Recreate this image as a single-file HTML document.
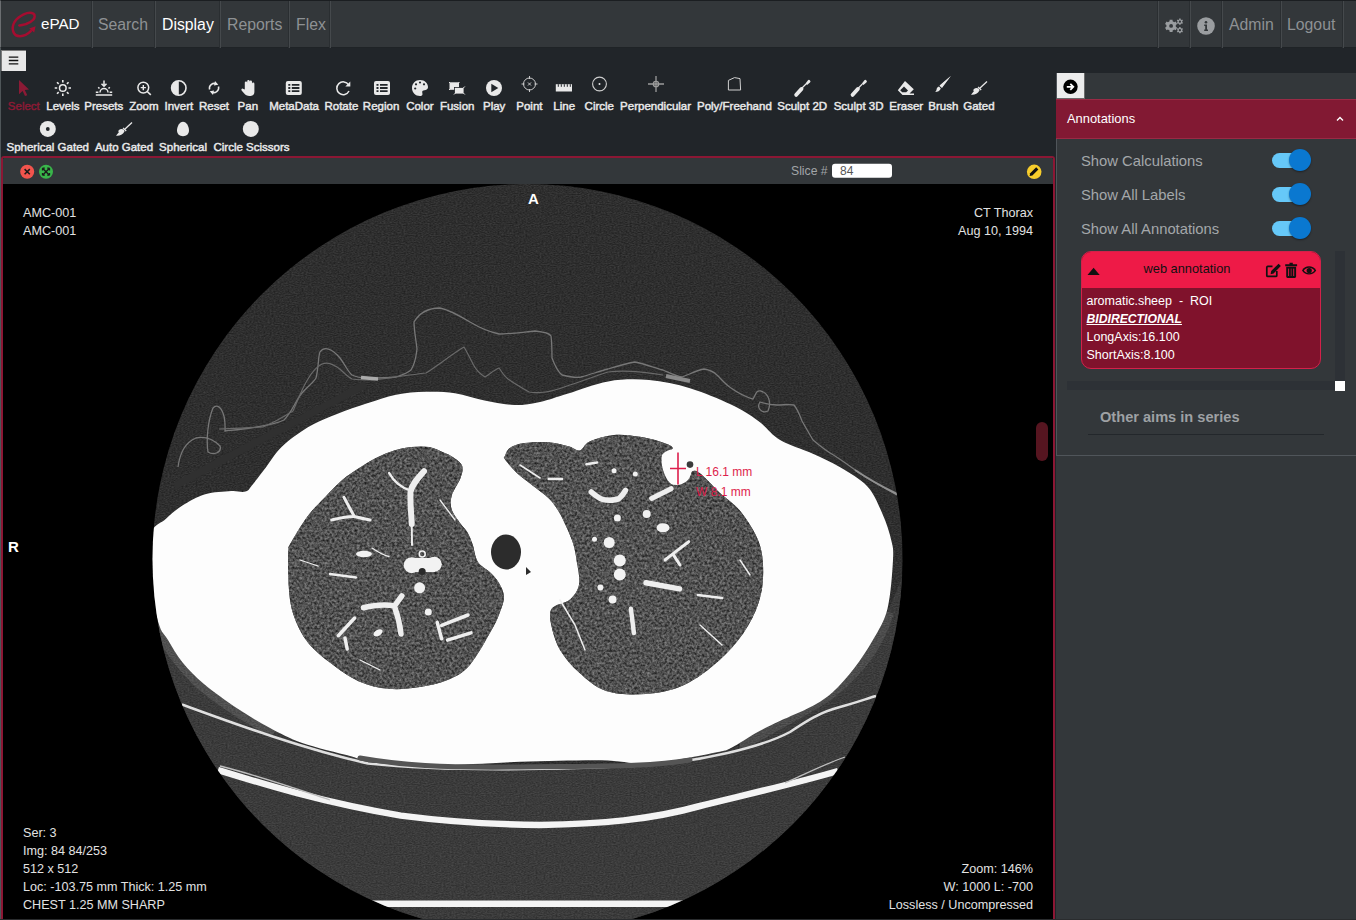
<!DOCTYPE html>
<html><head><meta charset="utf-8">
<style>
*{box-sizing:border-box;margin:0;padding:0}
html,body{width:1356px;height:920px;overflow:hidden;background:#212529;font-family:"Liberation Sans",sans-serif}
body{position:relative}
.abs{position:absolute}
#nav{left:0;top:0;width:1356px;height:48px;background:#33373a;border-top:1px solid #1b1e21;border-left:1px solid #6b6e71;border-bottom:1px solid #1f2326}
.sep{position:absolute;top:0;width:2px;height:47px;background:linear-gradient(90deg,#2a2e31 50%,#45494c 50%)}
.nt{position:absolute;top:14px;font-size:15.8px;line-height:20px;color:#8e9194;white-space:nowrap}
.tl{position:absolute;width:120px;text-align:center;font-size:11.5px;line-height:14px;font-weight:normal;-webkit-text-stroke:0.45px #e9e9e9;color:#e9e9e9;white-space:nowrap}
.tl.sel{-webkit-text-stroke:0.45px #8b1a35}
.tl.sel{color:#8b1a35}
#vp{left:1px;top:156px;width:1054px;height:780px;border:2px solid #8b1734;border-radius:3px;background:#000;overflow:hidden}
.ov{position:absolute;font-size:12.6px;line-height:18px;color:#e2e2e2;white-space:nowrap}
#rp{left:1056px;top:73px;width:300px;height:847px;background:#33373a}
.sw{position:absolute;font-size:14.8px;line-height:18px;color:#a4a7aa;white-space:nowrap}
.tg{position:absolute;left:1272px;width:30px;height:15px;border-radius:7.5px;background:#66c8f8}
.kn{position:absolute;left:1289px;width:22px;height:22px;border-radius:11px;background:#0a78d0;box-shadow:0 1px 2px rgba(0,0,0,.4)}
.ct{position:absolute;font-size:12.5px;line-height:18px;color:#fff;white-space:nowrap}
</style></head><body>
<div id="nav" class="abs">
  <div class="sep" style="left:90px"></div>
  <div class="sep" style="left:153px"></div>
  <div class="sep" style="left:218px"></div>
  <div class="sep" style="left:287px"></div>
  <div class="sep" style="left:328px"></div>
  <div class="sep" style="left:1156px"></div>
  <div class="sep" style="left:1188px"></div>
  <div class="sep" style="left:1220px"></div>
  <div class="sep" style="left:1279px"></div>
  <div class="sep" style="left:1341px"></div>
<div class="nt" style="left:40px;color:#fff;font-size:15.2px;top:13px">ePAD</div>
  <div class="nt" style="left:97px">Search</div>
  <div class="nt" style="left:161px;color:#fff">Display</div>
  <div class="nt" style="left:226px">Reports</div>
  <div class="nt" style="left:295px">Flex</div>
  <div class="nt" style="left:1228px">Admin</div>
  <div class="nt" style="left:1286px">Logout</div>
</div>
<!-- hamburger -->
<div class="abs" style="left:1px;top:50px;width:25px;height:21px;background:#e8e8e8;border-top:1px solid #7a7a7a;border-left:1px solid #7a7a7a"></div>
<svg class="abs" style="left:0;top:0" width="1356" height="160" viewBox="0 0 1356 160">
  <!-- logo -->
  <path d="M19.3,25.4 C22,25.2 24,24.6 26.1,24 C29,23 31.5,21.8 33.2,19.8 C35,17.6 35.3,14.8 33.4,13.6 C31.5,12.6 27,12.8 23.7,14.3 C20,16 16.5,18.8 14.5,22 C12.8,25 12.3,28.5 13.2,31.5 C14.2,34.5 16.8,36.2 20,36.2 C24,36.2 27.5,34.5 30.8,31.2" fill="none" stroke="#a50d30" stroke-width="2.5" stroke-linecap="round"/>
  <path d="M29.2,28.4 L35.6,26.2 L34.2,32.6 Z" fill="#a50d30"/>
  <!-- gears -->
  <path d="M1169.59,21.34 L1169.63,19.77 L1172.57,19.77 L1172.61,21.34 L1174.29,22.32 L1175.67,21.56 L1177.14,24.11 L1175.80,24.93 L1175.80,26.87 L1177.14,27.69 L1175.67,30.24 L1174.29,29.48 L1172.61,30.46 L1172.57,32.03 L1169.63,32.03 L1169.59,30.46 L1167.91,29.48 L1166.53,30.24 L1165.06,27.69 L1166.40,26.87 L1166.40,24.93 L1165.06,24.11 L1166.53,21.56 L1167.91,22.32Z" fill="#9a9da0"/>
  <circle cx="1171.1" cy="25.9" r="1.9" fill="#33373a"/>
  <path d="M1179.15,19.42 L1179.15,18.59 L1180.65,18.59 L1180.65,19.42 L1181.50,19.91 L1182.22,19.50 L1182.97,20.79 L1182.25,21.21 L1182.25,22.19 L1182.97,22.61 L1182.22,23.90 L1181.50,23.49 L1180.65,23.98 L1180.65,24.81 L1179.15,24.81 L1179.15,23.98 L1178.30,23.49 L1177.58,23.90 L1176.83,22.61 L1177.55,22.19 L1177.55,21.21 L1176.83,20.79 L1177.58,19.50 L1178.30,19.91Z" fill="#9a9da0"/>
  <circle cx="1179.9" cy="21.7" r="1.1" fill="#33373a"/>
  <path d="M1179.15,27.92 L1179.15,27.09 L1180.65,27.09 L1180.65,27.92 L1181.50,28.41 L1182.22,28.00 L1182.97,29.29 L1182.25,29.71 L1182.25,30.69 L1182.97,31.11 L1182.22,32.40 L1181.50,31.99 L1180.65,32.48 L1180.65,33.31 L1179.15,33.31 L1179.15,32.48 L1178.30,31.99 L1177.58,32.40 L1176.83,31.11 L1177.55,30.69 L1177.55,29.71 L1176.83,29.29 L1177.58,28.00 L1178.30,28.41Z" fill="#9a9da0"/>
  <circle cx="1179.9" cy="30.2" r="1.1" fill="#33373a"/>
  <!-- info -->
  <circle cx="1206" cy="26" r="8.8" fill="#9a9da0"/>
  <circle cx="1206" cy="22.2" r="1.3" fill="#33373a"/>
  <path d="M1204.2,24.5h2.8v5h1v1.4h-3.8v-1.4h1v-3.6h-1z" fill="#33373a"/>
  <!-- hamburger lines -->
  <path d="M8.8,57.2h9.5M8.8,60.5h9.5M8.8,63.8h9.5" stroke="#111" stroke-width="1.3"/>

  <!-- row1 icons -->
  <path d="M19,80 L29,89.5 L24.8,90 L27.3,95.2 L25,96 L22.6,90.9 L19,94.3Z" fill="#8b1a35"/>
  <g stroke="#e9e9e9" fill="none">
    <circle cx="62.8" cy="88" r="3.3" stroke-width="1.5"/>
    <path d="M62.8,80v2.5M62.8,93.5v2.5M54.7,88h2.5M68.5,88h2.5M57,82.2l1.7,1.7M66.9,92.1l1.7,1.7M57,93.8l1.7,-1.7M66.9,83.9l1.7,-1.7" stroke-width="1.6"/>
  </g>
  <g stroke="#e9e9e9" fill="none" stroke-width="1.5">
    <path d="M104,80.5v5.5M101.5,83.8l2.5,2.5l2.5,-2.5"/>
    <path d="M100,92.5a4,4 0 0 1 8,0"/>
    <path d="M98.2,87.2l1.3,1.3M109.8,87.2l-1.3,1.3M95.8,92.3h2.6M109.6,92.3h2.6M95.8,95h16.4"/>
  </g>
  <g stroke="#e9e9e9" fill="none">
    <circle cx="143.3" cy="87.6" r="5.4" stroke-width="1.5"/>
    <path d="M147.2,91.5l3.6,3.4" stroke-width="1.6"/>
    <path d="M143.3,85v5.2M140.7,87.6h5.2" stroke-width="1.4"/>
  </g>
  <circle cx="178.8" cy="88" r="7.2" fill="none" stroke="#e9e9e9" stroke-width="1.6"/>
  <path d="M178.8,80.8a7.2,7.2 0 0 0 0,14.4z" fill="#e9e9e9"/>
  <g stroke="#e9e9e9" fill="none" stroke-width="1.5">
    <path d="M209.6,89.5a4.8,4.8 0 0 1 7.2,-5.3"/>
    <path d="M218.5,86.5a4.8,4.8 0 0 1 -7.2,5.3"/>
  </g>
  <path d="M215,81l3.3,3.8l-4.3,0.6z M213,95l-3.3,-3.8l4.3,-0.6z" fill="#e9e9e9"/>
  <!-- pan hand -->
  <path d="M244.8,89.5 V82.6 a1.2,1.2 0 0 1 2.4,0 V88 V81.3 a1.2,1.2 0 0 1 2.4,0 V88 V81.8 a1.2,1.2 0 0 1 2.4,0 V88.5 V83.8 a1.2,1.2 0 0 1 2.4,0 V91.5 C254.4,95 252.5,96 249.5,96 C247,96 245.5,95 244,93.3 L241.6,90.4 a1.1,1.1 0 0 1 1.8,-1.3z" fill="#e9e9e9"/>
  <!-- metadata / region -->
  <rect x="285.8" y="81" width="16" height="14" rx="2" fill="#e9e9e9"/>
  <path d="M288.3,84.8h2M291.8,84.8h7.6M288.3,88h2M291.8,88h7.6M288.3,91.2h2M291.8,91.2h7.6" stroke="#212529" stroke-width="1.8"/>
  <rect x="374" y="81" width="16" height="14" rx="2" fill="#e9e9e9"/>
  <path d="M376.5,84.8h2M380,84.8h7.6M376.5,88h2M380,88h7.6M376.5,91.2h2M380,91.2h7.6" stroke="#212529" stroke-width="1.8"/>
  <!-- rotate -->
  <path d="M348.6,84.8 A6.4,6.4 0 1 0 349,91" fill="none" stroke="#e9e9e9" stroke-width="1.5"/>
  <path d="M350.3,81.5 V86.5 H345.3z" fill="#e9e9e9"/>
  <!-- palette -->
  <path d="M420,80 C425,80 428,83.5 428,87 C428,90 425,90 423.5,90.5 C421.5,91 422.5,93 422.5,94 C422.5,95.5 421.5,96 420,96 C415.5,96 412,92.5 412,88 C412,83.5 415.5,80 420,80Z" fill="#e9e9e9"/>
  <circle cx="415.2" cy="88.5" r="1.1" fill="#212529"/>
  <circle cx="416" cy="84.3" r="1.1" fill="#212529"/>
  <circle cx="420" cy="82.5" r="1.1" fill="#212529"/>
  <circle cx="424" cy="84.3" r="1.1" fill="#212529"/>
  <!-- fusion -->
  <rect x="449.5" y="82.3" width="9.5" height="7.5" fill="#e9e9e9"/>
  <rect x="454.5" y="87.5" width="9.5" height="6.5" fill="#e9e9e9" stroke="#212529" stroke-width="0.8"/>
  <path d="M449,82l1.5,1.5M459.5,82l-1.5,1.5M449,90l1.5,-1.5M464.8,86.5l-1.5,1.5M454,94.5l1.5,-1.5M464.8,94.5l-1.5,-1.5" stroke="#e9e9e9" stroke-width="1"/>
  <!-- play -->
  <circle cx="494" cy="88" r="8" fill="#e9e9e9"/>
  <path d="M491.3,83.8 L498.3,88 L491.3,92.2Z" fill="#212529"/>
  <!-- point -->
  <g stroke="#c9c9c9" fill="none" stroke-width="1">
    <circle cx="529.5" cy="84" r="6"/>
    <path d="M529.5,76v3M529.5,89v3M521.5,84h3M534.5,84h3M528,82.5l3,3M531,82.5l-3,3"/>
  </g>
  <!-- ruler -->
  <path d="M555.8,84.2 h16.2 v7.3 h-16.2z" fill="#e9e9e9"/>
  <path d="M558.3,84.2v2.6M561.3,84.2v2.6M564.3,84.2v2.6M567.3,84.2v2.6M570.3,84.2v2.6" stroke="#212529" stroke-width="1"/>
  <!-- circle -->
  <circle cx="599.5" cy="84" r="6.9" fill="none" stroke="#cfcfcf" stroke-width="1.1"/>
  <circle cx="599.5" cy="84" r="1" fill="#e9e9e9"/>
  <!-- perpendicular -->
  <g stroke="#9c9c9c" fill="none" stroke-width="1.3">
    <path d="M656,76v16M648,84h16"/>
    <circle cx="656" cy="84" r="2.7"/>
  </g>
  <!-- poly -->
  <path d="M728.4,80.4 L734.5,77.6 L740,78.6 L740.6,90 L728.4,90Z" fill="none" stroke="#cfcfcf" stroke-width="1"/>
  <!-- sculpt 2D / 3D -->
  <g id="sc" fill="#e9e9e9">
    <path d="M794.8,93.6 L800.2,87.6 a1.9,1.9 0 0 1 2.7,2.7 L797.5,96.3 a1.9,1.9 0 0 1 -2.7,-2.7z"/>
    <path d="M805.5,83.5 L807.8,80.4 a1.5,1.5 0 0 1 2.2,2.2 L807,85 L805.5,83.5z"/>
    <path d="M801.5,88.5 L806,84" stroke="#e9e9e9" stroke-width="1.2"/>
  </g>
  <use href="#sc" x="56.4"/>
  <!-- eraser -->
  <path d="M905,81 L913.8,89.3 L909.5,93.5 L914,93.5 V95 H902.5 L897.8,90.3 Z" fill="#e9e9e9"/>
  <path d="M900.2,90.3 L904,86.5 L908,90.5 L906.2,92.3 H902.2Z" fill="#212529"/>
  <!-- brush -->
  <path d="M950.8,76 L941.5,87.5 L939.8,85.8Z" fill="#e9e9e9"/>
  <path d="M950.8,76 L942,88 L939.5,85.5Z" fill="#e9e9e9"/>
  <path d="M939,86.5 C937.5,86.8 936.5,88.5 936.5,90 L935.3,92 C937.5,92 940,91 940.8,88.5Z" fill="#e9e9e9"/>
  <!-- gated -->
  <g id="gt" fill="#e9e9e9">
    <path d="M987,81.5 L979.5,88.5" stroke="#e9e9e9" stroke-width="1.3"/>
    <path d="M978,86.8 l3.2,3.2" stroke="#e9e9e9" stroke-width="1.2"/>
    <path d="M978.8,88.5 C976,87.2 973.5,88.5 973.2,90.5 L974,91 L971,94.8 C974.5,95.2 977.5,94 979.5,90.5Z"/>
  </g>
  <!-- row2 -->
  <circle cx="47.8" cy="128.9" r="8" fill="#e9e9e9"/>
  <circle cx="47.8" cy="129" r="1.9" fill="#212529"/>
  <use href="#gt" x="-855" y="41"/>
  <path d="M183,121.8 C186.5,121.8 189,126.5 189,130.5 C189,134 186.5,136.2 183,136.2 C179.5,136.2 177,134 177,130.5 C177,126.5 179.5,121.8 183,121.8Z" fill="#e9e9e9"/>
  <circle cx="250.8" cy="128.9" r="8" fill="#e9e9e9"/>
</svg>
<div class="tl sel" style="left:-36.2px;top:99px">Select</div>
<div class="tl" style="left:2.9px;top:99px">Levels</div>
<div class="tl" style="left:43.8px;top:99px">Presets</div>
<div class="tl" style="left:83.9px;top:99px">Zoom</div>
<div class="tl" style="left:118.9px;top:99px">Invert</div>
<div class="tl" style="left:154.0px;top:99px">Reset</div>
<div class="tl" style="left:187.8px;top:99px">Pan</div>
<div class="tl" style="left:234.1px;top:99px">MetaData</div>
<div class="tl" style="left:281.4px;top:99px">Rotate</div>
<div class="tl" style="left:321.1px;top:99px">Region</div>
<div class="tl" style="left:359.9px;top:99px">Color</div>
<div class="tl" style="left:397.2px;top:99px">Fusion</div>
<div class="tl" style="left:434.2px;top:99px">Play</div>
<div class="tl" style="left:469.4px;top:99px">Point</div>
<div class="tl" style="left:504.2px;top:99px">Line</div>
<div class="tl" style="left:539.3px;top:99px">Circle</div>
<div class="tl" style="left:595.6px;top:99px">Perpendicular</div>
<div class="tl" style="left:674.4px;top:99px">Poly/Freehand</div>
<div class="tl" style="left:742.2px;top:99px">Sculpt 2D</div>
<div class="tl" style="left:798.6px;top:99px">Sculpt 3D</div>
<div class="tl" style="left:846.2px;top:99px">Eraser</div>
<div class="tl" style="left:883.4px;top:99px">Brush</div>
<div class="tl" style="left:918.9px;top:99px">Gated</div>
<div class="tl" style="left:-12.3px;top:140px">Spherical Gated</div>
<div class="tl" style="left:64.0px;top:140px">Auto Gated</div>
<div class="tl" style="left:123.1px;top:140px">Spherical</div>
<div class="tl" style="left:191.5px;top:140px">Circle Scissors</div>

<!-- viewport -->
<div id="vp" class="abs">
  <div class="abs" style="left:0;top:0;width:1051px;height:26px;background:#33373a"></div>
</div>
<svg class="abs" style="left:0;top:0" width="1356" height="920" viewBox="0 0 1356 920">
  <defs>
    <clipPath id="vclip"><rect x="3" y="184" width="1050" height="736"/></clipPath>
    <clipPath id="cclip"><circle cx="527.5" cy="559" r="375"/></clipPath>
    <filter id="nz2" x="0" y="0" width="100%" height="100%" filterUnits="objectBoundingBox" color-interpolation-filters="sRGB">
      <feTurbulence type="fractalNoise" baseFrequency="0.5 0.9" numOctaves="2" seed="11"/>
      <feColorMatrix type="matrix" values="1 0 0 0 0  1 0 0 0 0  1 0 0 0 0  0 0 0 0 0.16"/>
    </filter>
    <clipPath id="lclip"><path d="M288.5,548.0 C288.5,548.0 286.9,549.5 290.0,544.3 C293.1,539.0 301.6,524.3 307.4,516.5 C313.2,508.7 319.0,503.5 324.8,497.4 C330.6,491.3 336.4,484.9 342.2,480.0 C348.0,475.1 353.8,471.6 359.6,467.8 C365.4,464.0 371.2,460.3 377.0,457.4 C382.8,454.5 388.5,452.1 394.3,450.4 C400.1,448.7 405.9,447.6 411.7,447.0 C417.5,446.4 423.9,446.1 429.1,447.0 C434.3,447.9 438.9,450.5 443.0,452.2 C447.1,453.9 450.3,455.1 453.5,457.4 C456.7,459.7 461.1,462.5 462.2,466.0 C463.3,469.5 462.1,473.4 460.4,478.3 C458.6,483.2 453.1,490.5 451.7,495.7 C450.2,500.9 450.2,505.0 451.7,509.6 C453.1,514.2 457.8,519.7 460.4,523.5 C463.0,527.3 465.4,528.7 467.4,532.2 C469.4,535.7 470.9,539.4 472.6,544.3 C474.3,549.2 474.9,557.1 477.8,561.7 C480.7,566.4 486.5,568.7 490.0,572.2 C493.5,575.7 496.4,578.6 498.7,582.6 C501.0,586.6 503.7,591.6 503.9,596.5 C504.1,601.4 502.0,606.5 500.0,612.0 C498.0,617.5 496.8,620.9 491.7,629.8 C486.6,638.7 477.0,656.8 469.6,665.2 C462.2,673.6 456.1,676.3 447.5,680.0 C438.9,683.7 427.8,685.8 418.0,687.3 C408.2,688.8 398.3,689.8 388.5,688.8 C378.7,687.8 368.8,685.8 359.0,681.4 C349.2,677.0 338.3,669.2 329.5,662.3 C320.7,655.4 312.2,648.7 306.0,640.0 C299.8,631.3 294.9,620.3 292.0,610.0 C289.1,599.7 288.9,588.6 288.3,578.3 C287.7,568.0 288.2,553.7 288.5,548.0Z"/><path d="M504.9,456.1 C504.9,456.1 506.5,450.1 509.8,447.9 C513.1,445.7 518.0,443.9 524.5,443.0 C531.0,442.1 541.6,441.6 548.9,442.2 C556.2,442.8 563.3,444.9 568.5,446.3 C573.7,447.7 576.4,451.2 579.9,450.4 C583.4,449.6 583.9,444.0 589.6,441.4 C595.3,438.8 606.0,435.7 614.1,434.9 C622.2,434.1 630.9,435.4 638.5,436.5 C646.1,437.6 654.0,439.5 659.7,441.4 C665.4,443.3 672.2,445.4 672.8,447.9 C673.3,450.3 663.8,452.8 663.0,456.1 C662.2,459.4 666.5,462.9 667.9,467.5 C669.2,472.1 668.4,481.8 671.1,484.0 C673.8,486.2 679.9,483.2 684.0,481.0 C688.1,478.8 690.0,469.0 696.0,471.0 C702.0,473.0 712.6,486.3 720.0,493.0 C727.4,499.7 733.9,503.2 740.4,511.3 C746.9,519.4 754.9,531.6 758.7,541.7 C762.5,551.9 763.2,562.1 763.2,572.2 C763.2,582.4 762.0,592.5 758.7,602.6 C755.4,612.7 750.1,623.4 743.5,633.0 C736.9,642.6 729.0,651.7 719.1,660.4 C709.2,669.1 696.2,679.4 684.0,685.0 C671.8,690.6 659.0,693.0 646.0,694.0 C633.0,695.0 617.1,694.6 606.0,691.0 C594.9,687.4 586.6,679.2 579.1,672.6 C571.6,666.0 565.5,658.9 560.9,651.3 C556.3,643.7 553.2,634.0 551.7,626.9 C550.2,619.8 548.7,613.3 551.7,608.7 C554.8,604.1 565.4,603.6 570.0,599.5 C574.6,595.4 578.0,590.8 579.1,584.3 C580.2,577.8 577.6,567.1 576.6,560.4 C575.6,553.7 574.9,549.5 573.3,544.1 C571.7,538.7 569.2,533.2 566.8,527.8 C564.4,522.4 561.7,516.4 558.7,511.5 C555.7,506.6 553.2,502.9 548.9,498.5 C544.5,494.1 538.0,489.8 532.6,485.4 C527.2,481.0 520.9,476.8 516.3,472.4 C511.7,468.0 506.8,462.0 504.9,459.3 C503.0,456.6 504.1,458.0 504.9,456.1Z"/></clipPath>
    <filter id="nz" x="0" y="0" width="100%" height="100%" filterUnits="objectBoundingBox" color-interpolation-filters="sRGB">
      <feTurbulence type="fractalNoise" baseFrequency="0.4" numOctaves="2" seed="7"/>
      <feColorMatrix type="matrix" values="0.6 0 0 0 0.02  0.6 0 0 0 0.02  0.6 0 0 0 0.02  0 0 0 0 1"/>
    </filter>
  </defs>
  <g clip-path="url(#vclip)">
    <circle cx="527.5" cy="559" r="375" fill="#1f1f1f"/>
    <g clip-path="url(#cclip)">
      <path d="M150,600 L160,622 L184,664 L238,710 L302,745 L368,761 L520,765 L650,765 L732,749 L811,708 L856,668 L889,608 L910,560 L910,940 L150,940 Z" fill="#2e2e2e"/>
      <path d="M157,622 C168,645 185,668 204,685 C225,702 250,718 275,731" fill="none" stroke="#474747" stroke-width="14"/>
      <path d="M888,612 C878,645 860,668 832,692 C810,708 780,722 740,745" fill="none" stroke="#424242" stroke-width="12"/>
      <rect x="150" y="184" width="760" height="740" filter="url(#nz2)"/>
      <path d="M248.5,490.0 C248.5,490.0 261.3,473.5 266.2,467.0 C271.1,460.5 273.6,455.7 278.0,450.8 C282.4,445.9 286.8,441.9 292.7,437.5 C298.6,433.1 306.0,428.1 313.4,424.2 C320.8,420.3 328.1,417.3 337.0,413.9 C345.9,410.5 356.7,406.8 366.5,403.6 C376.3,400.4 386.2,396.7 396.0,394.7 C405.8,392.7 415.7,392.1 425.5,391.8 C435.3,391.6 445.2,391.7 455.0,393.2 C464.8,394.7 474.7,398.6 484.5,400.6 C494.3,402.6 504.8,404.8 514.0,405.0 C523.2,405.2 531.1,403.8 540.0,401.9 C548.9,400.0 555.9,397.1 567.3,393.7 C578.7,390.3 594.6,383.7 608.2,381.4 C621.8,379.1 635.5,378.9 649.1,380.0 C662.7,381.1 676.4,384.1 690.0,388.2 C703.6,392.3 719.6,399.1 731.0,404.6 C742.4,410.1 750.1,415.1 758.3,421.0 C766.5,426.9 771.0,434.6 780.1,440.0 C789.2,445.4 802.9,449.1 812.9,453.7 C822.9,458.2 831.0,461.8 840.1,467.3 C849.2,472.8 860.3,478.7 867.4,486.5 C874.5,494.3 878.5,505.0 882.5,513.9 C886.5,522.8 889.5,532.3 891.2,540.0 C893.0,547.7 893.6,548.5 893.0,560.0 C892.4,571.5 890.8,595.4 887.5,608.7 C884.2,622.0 878.6,629.8 873.0,639.8 C867.4,649.8 860.8,659.7 854.0,668.5 C847.2,677.3 839.6,686.0 832.4,692.4 C825.2,698.8 819.8,702.0 811.0,706.8 C802.2,711.6 789.0,716.7 779.8,721.1 C770.6,725.5 763.9,728.7 755.9,733.1 C747.9,737.5 738.7,744.3 732.0,747.5 C725.3,750.7 729.2,749.8 715.6,752.5 C702.0,755.2 669.4,762.2 650.4,763.5 C631.4,764.8 623.2,760.5 601.5,760.2 C579.8,759.9 548.0,761.0 520.0,761.8 C492.0,762.6 458.7,765.4 433.4,765.1 C408.1,764.8 382.1,761.7 368.2,760.2 C354.3,758.7 361.0,758.9 350.0,756.0 C339.0,753.1 315.6,747.7 302.2,743.0 C288.8,738.3 280.5,733.6 269.6,727.8 C258.7,722.0 247.9,715.5 237.0,708.3 C226.1,701.0 213.4,691.9 204.3,684.3 C195.2,676.7 188.7,670.0 182.6,662.6 C176.5,655.2 172.0,646.5 168.0,640.0 C164.0,633.5 161.7,633.5 158.7,623.5 C155.7,613.5 151.4,594.8 150.0,580.0 C148.6,565.2 147.3,545.2 150.0,535.0 C152.7,524.8 160.6,523.6 166.0,518.7 C171.4,513.8 175.9,509.7 182.4,505.6 C188.9,501.5 197.0,496.6 205.2,494.2 C213.3,491.8 224.1,491.7 231.3,491.0 C238.5,490.3 242.7,494.0 248.5,490.0Z" fill="#fdfdfd"/>
      <!-- table lines -->
      <path d="M182,704.5 C230,722 300,748 368,763.5 C430,770 520,771.5 650,765 C700,761 760,748 790,732 C805,722 820,712 840,707 C855,703 866,699 876,696" fill="none" stroke="#e0e0e0" stroke-width="2.5"/>
      <path d="M218,770 C260,783 320,802 400.8,815.6 C450,822 500,824.5 540,825 C600,824 650,820 700,806 C740,796 790,785 838,771" fill="none" stroke="#f4f4f4" stroke-width="6.5"/>
      <path d="M220,766 C260,776 300,790 330,800 M785,783 C805,774 825,764 845,757" fill="none" stroke="#bdbdbd" stroke-width="1.3"/>
      <path d="M370,903.7 H690" stroke="#f4f4f4" stroke-width="6.5"/>
      <path d="M360,758 C400,765 440,768 520,767 C600,766 650,767 690,760" fill="none" stroke="#555" stroke-width="5" stroke-linecap="round"/>
      <!-- skin lines -->
      <path d="M175,486 C220,460 300,420 366,384" fill="none" stroke="#303030" stroke-width="7"/>
      <path d="M178,467 C180,452 186,442 196,438 C206,436 214,440 220,446 C222,452 214,456 208,452 C206,440 208,420 213,408 C218,402 226,410 225,431 C234,430 244,429 250,428 C264,426 276,424 284,420 C292,412 296,400 302,393 C308,386 314,382 316,378 C319,366 318,356 320,352 C324,346 332,348 340,358 C346,366 348,372 352,375 C358,378 362,378 367,378 C378,378 388,378 396,377 C402,375 408,373 411,370 C416,362 416,355 417,349 C416,340 414,330 414,322 C420,312 430,308 440,308 C450,310 460,316 470,322 C480,328 490,332 499,334 C510,334 524,332 535,331 C545,332 550,334 551,336 C552,344 552,352 552,358 C555,366 558,372 562,375 C570,377 576,378 581,377 C592,374 600,371 608,369 C618,366 628,363 635,362 C645,364 655,368 663,370 C670,373 676,376 682,377 C690,374 698,370 704,369 C710,370 714,372 717,375 C722,380 726,385 731,388 C738,393 746,397 753,399 C756,394 756,390 761,391 C768,393 772,402 768,411 C762,414 756,408 760,402 C766,404 772,405 777,405 C784,405 789,404 794,405 C798,410 800,416 802,421 C806,428 810,435 813,440 C820,446 828,452 835,456 C846,463 856,471 867,478 C877,484 888,490 897,495" fill="none" stroke="#777" stroke-width="1.3"/>
      <path d="M219,429 C235,428 250,428 263,427 C275,422 285,416 293,411 C298,400 302,388 308,379 C312,372 318,366 322,364 C328,362 332,364 337,367 C342,370 346,376 352,379 C360,380 366,380 372,380 C390,378 408,375 426,373 C440,364 452,354 464,347 C467,352 470,358 473,364 C476,370 480,374 485,377 C490,374 494,370 499,368 C502,372 504,376 508,379 C515,384 522,388 529,392 C540,394 552,392 567,386 C580,382 595,376 608,372 C625,370 645,372 663,375" fill="none" stroke="#6a6a6a" stroke-width="1.2"/>
      <path d="M361,377.5 L378,379" stroke="#aaa" stroke-width="3.5"/>
      <path d="M666,376 L690,381" stroke="#8a8a8a" stroke-width="4"/>
      <path d="M855,470 C870,480 885,488 897,494" stroke="#909090" stroke-width="2"/>
    </g>
    <!-- lungs -->
    <path d="M288.5,548.0 C288.5,548.0 286.9,549.5 290.0,544.3 C293.1,539.0 301.6,524.3 307.4,516.5 C313.2,508.7 319.0,503.5 324.8,497.4 C330.6,491.3 336.4,484.9 342.2,480.0 C348.0,475.1 353.8,471.6 359.6,467.8 C365.4,464.0 371.2,460.3 377.0,457.4 C382.8,454.5 388.5,452.1 394.3,450.4 C400.1,448.7 405.9,447.6 411.7,447.0 C417.5,446.4 423.9,446.1 429.1,447.0 C434.3,447.9 438.9,450.5 443.0,452.2 C447.1,453.9 450.3,455.1 453.5,457.4 C456.7,459.7 461.1,462.5 462.2,466.0 C463.3,469.5 462.1,473.4 460.4,478.3 C458.6,483.2 453.1,490.5 451.7,495.7 C450.2,500.9 450.2,505.0 451.7,509.6 C453.1,514.2 457.8,519.7 460.4,523.5 C463.0,527.3 465.4,528.7 467.4,532.2 C469.4,535.7 470.9,539.4 472.6,544.3 C474.3,549.2 474.9,557.1 477.8,561.7 C480.7,566.4 486.5,568.7 490.0,572.2 C493.5,575.7 496.4,578.6 498.7,582.6 C501.0,586.6 503.7,591.6 503.9,596.5 C504.1,601.4 502.0,606.5 500.0,612.0 C498.0,617.5 496.8,620.9 491.7,629.8 C486.6,638.7 477.0,656.8 469.6,665.2 C462.2,673.6 456.1,676.3 447.5,680.0 C438.9,683.7 427.8,685.8 418.0,687.3 C408.2,688.8 398.3,689.8 388.5,688.8 C378.7,687.8 368.8,685.8 359.0,681.4 C349.2,677.0 338.3,669.2 329.5,662.3 C320.7,655.4 312.2,648.7 306.0,640.0 C299.8,631.3 294.9,620.3 292.0,610.0 C289.1,599.7 288.9,588.6 288.3,578.3 C287.7,568.0 288.2,553.7 288.5,548.0Z" fill="#525252"/>
    <path d="M504.9,456.1 C504.9,456.1 506.5,450.1 509.8,447.9 C513.1,445.7 518.0,443.9 524.5,443.0 C531.0,442.1 541.6,441.6 548.9,442.2 C556.2,442.8 563.3,444.9 568.5,446.3 C573.7,447.7 576.4,451.2 579.9,450.4 C583.4,449.6 583.9,444.0 589.6,441.4 C595.3,438.8 606.0,435.7 614.1,434.9 C622.2,434.1 630.9,435.4 638.5,436.5 C646.1,437.6 654.0,439.5 659.7,441.4 C665.4,443.3 672.2,445.4 672.8,447.9 C673.3,450.3 663.8,452.8 663.0,456.1 C662.2,459.4 666.5,462.9 667.9,467.5 C669.2,472.1 668.4,481.8 671.1,484.0 C673.8,486.2 679.9,483.2 684.0,481.0 C688.1,478.8 690.0,469.0 696.0,471.0 C702.0,473.0 712.6,486.3 720.0,493.0 C727.4,499.7 733.9,503.2 740.4,511.3 C746.9,519.4 754.9,531.6 758.7,541.7 C762.5,551.9 763.2,562.1 763.2,572.2 C763.2,582.4 762.0,592.5 758.7,602.6 C755.4,612.7 750.1,623.4 743.5,633.0 C736.9,642.6 729.0,651.7 719.1,660.4 C709.2,669.1 696.2,679.4 684.0,685.0 C671.8,690.6 659.0,693.0 646.0,694.0 C633.0,695.0 617.1,694.6 606.0,691.0 C594.9,687.4 586.6,679.2 579.1,672.6 C571.6,666.0 565.5,658.9 560.9,651.3 C556.3,643.7 553.2,634.0 551.7,626.9 C550.2,619.8 548.7,613.3 551.7,608.7 C554.8,604.1 565.4,603.6 570.0,599.5 C574.6,595.4 578.0,590.8 579.1,584.3 C580.2,577.8 577.6,567.1 576.6,560.4 C575.6,553.7 574.9,549.5 573.3,544.1 C571.7,538.7 569.2,533.2 566.8,527.8 C564.4,522.4 561.7,516.4 558.7,511.5 C555.7,506.6 553.2,502.9 548.9,498.5 C544.5,494.1 538.0,489.8 532.6,485.4 C527.2,481.0 520.9,476.8 516.3,472.4 C511.7,468.0 506.8,462.0 504.9,459.3 C503.0,456.6 504.1,458.0 504.9,456.1Z" fill="#525252"/>
    <g clip-path="url(#lclip)"><rect x="280" y="430" width="490" height="270" filter="url(#nz)"/></g>
    <!-- trachea -->
    <ellipse cx="506" cy="552" rx="15" ry="17.5" fill="#2c2c2c"/>
    <path d="M526,567 L531,572 L526,575Z" fill="#2c2c2c"/>
    <!-- vessels left -->
    <g fill="#f2f2f2">
      <circle cx="411.7" cy="565.2" r="8"/>
      <circle cx="434.3" cy="564.3" r="7.5"/>
      <rect x="411" y="558" width="24" height="14"/>
      <circle cx="419.6" cy="587.8" r="5.5"/>
      <circle cx="422.2" cy="554" r="3" fill="none" stroke="#f2f2f2" stroke-width="1.5"/>
      <ellipse cx="364" cy="554" rx="8" ry="3.2"/>
      <ellipse cx="378" cy="632.8" rx="5" ry="3" transform="rotate(-30 378 632.8)"/>
      <circle cx="428.3" cy="612.1" r="3.5"/>
      <ellipse cx="663" cy="527.8" rx="6.5" ry="4.5"/>
      <circle cx="646.7" cy="514" r="4"/>
      <circle cx="617.4" cy="518" r="3.5"/>
      <circle cx="609.2" cy="542.5" r="5.5"/>
      <circle cx="619.8" cy="560.4" r="6"/>
      <circle cx="619.8" cy="574.5" r="6"/>
      <circle cx="614.1" cy="470.8" r="2.5"/>
      <circle cx="635.3" cy="474" r="2.5"/>
      <circle cx="612.6" cy="599.5" r="4"/>
      <circle cx="600.4" cy="587.4" r="3"/>
      <circle cx="594.5" cy="539.2" r="2.5"/>
    </g>
    <circle cx="422.2" cy="571.5" r="3.5" fill="#2a2a2a"/>
    <g stroke="#eeeeee" fill="none" stroke-linecap="round">
      <path d="M424,471.3 C418,478 412,484 410.5,492 C410,505 411.5,515 411.7,524" stroke-width="6"/>
      <path d="M411.7,524 L412,545" stroke-width="2"/>
      <path d="M389.1,473 C393,480 400,487 410,490.4" stroke-width="2.5"/>
      <path d="M331.7,520 C340,518 348,516 354.3,516.5 C360,518 365,519 370,520 M344,497.4 L354.3,516.5" stroke-width="3"/>
      <path d="M330,574 L356,577.4" stroke-width="2.5"/>
      <path d="M363.4,607.7 C375,605 386,604 394.4,606.2 L401.8,595.9 M394.4,606.2 C398,616 400,625 401,634" stroke-width="5.5"/>
      <path d="M338.3,635.7 L354.6,618 M345,638 L347.2,649" stroke-width="3.5"/>
      <path d="M437.2,622.4 L441.6,638.7 M441.6,625.4 L468,615 M447.5,640.1 L471,632.8" stroke-width="3.5"/>
      <path d="M591.3,492 C597,497 601,500 606,500.1 C612,500.5 616,500 619,498.5 C622,496 624,493 625.5,490.3" stroke-width="5.5"/>
      <path d="M651.6,498.5 L671.1,488.7" stroke-width="5"/>
      <path d="M646,582.8 L679.5,588.9" stroke-width="5.5"/>
      <path d="M630.9,608.7 L633.9,633" stroke-width="4.5"/>
      <path d="M665,560 L672.8,553.9 L688.7,541.7 M672.8,553.9 L680,565" stroke-width="3"/>
      <path d="M697.8,595 L722.2,598" stroke-width="2.5"/>
      <path d="M548.9,478.9 L562,478.9 M586.4,464.2 L597,462.5" stroke-width="2.5"/>
      <path d="M560,600 L575,625 L585,650 M700,625 L722,645 M740,560 L750,575 M520,465 L540,478" stroke-width="1.5"/>
      <path d="M300,560 L318,566 M440,500 L455,520 M360,660 L380,670 M372,548 C378,552 386,556 389,556.5" stroke-width="1.3"/>
    </g>
    <!-- lesion -->
    <path d="M662,455 C667,448 680,447 688,456 C694,462 693,474 688,480 C682,486 674,486 670,483 C664,477 660,463 662,455Z" fill="#fdfdfd"/>
    <circle cx="690" cy="464.6" r="3.3" fill="#3a3a3a"/>
    <!-- annotation cross -->
    <path d="M678,452.5v32M670,468.5h16" stroke="#dd1f4c" stroke-width="1.6"/>
    <text x="696" y="476" font-family="Liberation Sans" font-size="12" fill="#dd1f4c">L 16.1 mm</text>
    <text x="696" y="496" font-family="Liberation Sans" font-size="12" fill="#dd1f4c">W 8.1 mm</text>
  </g>
  <!-- viewport header items -->
  <circle cx="27.2" cy="171.7" r="7" fill="#f2544d"/>
  <path d="M24.6,169.1l5.2,5.2M29.8,169.1l-5.2,5.2" stroke="#1a1a1a" stroke-width="1.5"/>
  <circle cx="46" cy="171.7" r="7" fill="#39b54a"/>
  <path d="M42.8,168.5l6.4,6.4M49.2,168.5l-6.4,6.4" stroke="#1a1a1a" stroke-width="1.4"/>
  <path d="M42.5,168.2h2.3M42.5,168.2v2.3M49.5,168.2h-2.3M49.5,168.2v2.3M42.5,175.2h2.3M42.5,175.2v-2.3M49.5,175.2h-2.3M49.5,175.2v-2.3" stroke="#1a1a1a" stroke-width="1.3"/>
  <rect x="832" y="163.7" width="60" height="14" rx="3" fill="#fff"/>
  <circle cx="1034.2" cy="171.8" r="7.3" fill="#f7cd2c"/>
  <path d="M1029.6,176 L1030.2,173.2 L1036.2,167.2 L1038.4,169.4 L1032.4,175.4Z" fill="#111"/>
  <!-- scrollbar thumb -->
  <rect x="1036" y="422" width="12" height="39" rx="6" fill="#561520"/>
</svg>
<div class="ov" style="left:791px;top:162px;color:#a2a5a8;font-size:12.2px">Slice #</div>
<div class="ov" style="left:840px;top:162px;color:#555;font-size:12px">84</div>
<div class="ov" style="left:23px;top:204px">AMC-001</div>
<div class="ov" style="left:23px;top:222px">AMC-001</div>
<div class="ov" style="left:833px;top:204px;width:200px;text-align:right">CT Thorax</div>
<div class="ov" style="left:833px;top:222px;width:200px;text-align:right">Aug 10, 1994</div>
<div class="ov" style="left:528px;top:190px;font-size:15px;color:#fff;font-weight:bold">A</div>
<div class="ov" style="left:8px;top:538px;font-size:15px;color:#fff;font-weight:bold">R</div>
<div class="ov" style="left:23px;top:824px">Ser: 3</div>
<div class="ov" style="left:23px;top:842px">Img: 84 84/253</div>
<div class="ov" style="left:23px;top:860px">512 x 512</div>
<div class="ov" style="left:23px;top:878px">Loc: -103.75 mm Thick: 1.25 mm</div>
<div class="ov" style="left:23px;top:896px">CHEST 1.25 MM SHARP</div>
<div class="ov" style="left:733px;top:860px;width:300px;text-align:right">Zoom: 146%</div>
<div class="ov" style="left:733px;top:878px;width:300px;text-align:right">W: 1000 L: -700</div>
<div class="ov" style="left:733px;top:896px;width:300px;text-align:right">Lossless / Uncompressed</div>

<!-- right panel -->
<div id="rp" class="abs"></div>
<div class="abs" style="left:1056px;top:73px;width:300px;height:383px;border-left:1px solid #50555a;border-bottom:1px solid #50555a"></div>
<div class="abs" style="left:1057px;top:73px;width:28px;height:26px;background:#ececec;border-right:1px solid #6a6a6a;border-bottom:1px solid #6a6a6a"></div>
<svg class="abs" style="left:1060px;top:77px" width="20" height="20" viewBox="0 0 20 20">
  <circle cx="10.5" cy="9.8" r="7.2" fill="#000"/>
  <path d="M6.8,9.8h6M10.3,6.8l3,3l-3,3" fill="none" stroke="#fff" stroke-width="1.8"/>
</svg>
<div class="abs" style="left:1056px;top:99px;width:300px;height:40px;background:#821933;border-top:1px solid #9a2a45;border-bottom:1px solid #9a2a45"></div>
<div class="ct" style="left:1067px;top:110px;font-size:12.9px">Annotations</div>
<svg class="abs" style="left:1334px;top:113px" width="12" height="12" viewBox="0 0 12 12"><path d="M3,7.5l3,-3l3,3" fill="none" stroke="#fff" stroke-width="1.4"/></svg>
<div class="sw" style="left:1081px;top:152px">Show Calculations</div>
<div class="sw" style="left:1081px;top:186px">Show All Labels</div>
<div class="sw" style="left:1081px;top:220px">Show All Annotations</div>
<div class="tg" style="top:153px"></div><div class="kn" style="top:149px"></div>
<div class="tg" style="top:187px"></div><div class="kn" style="top:183px"></div>
<div class="tg" style="top:221px"></div><div class="kn" style="top:217px"></div>
<!-- scroll tracks -->
<div class="abs" style="left:1335px;top:251px;width:10px;height:130px;background:#2d3136"></div>
<div class="abs" style="left:1067px;top:381px;width:268px;height:9px;background:#2d3136"></div>
<div class="abs" style="left:1335px;top:381px;width:10px;height:10px;background:#fff"></div>
<!-- card -->
<div class="abs" style="left:1081px;top:251px;width:240px;height:118px;border-radius:10px;background:#80122c;border:1px solid #d3214a;overflow:hidden">
  <div class="abs" style="left:0;top:0;width:238px;height:36px;background:#ee1a47"></div>
</div>
<svg class="abs" style="left:1085px;top:258px" width="240" height="24" viewBox="1085 258 240 24">
  <path d="M1087.5,275 L1093.6,267.8 L1099.7,275Z" fill="#111"/>
  <path d="M1272.5,266.4 H1267.8 a1,1 0 0 0 -1,1 V275.4 a1,1 0 0 0 1,1 H1275.8 a1,1 0 0 0 1,-1 V271" fill="none" stroke="#111" stroke-width="1.7"/>
  <path d="M1270.6,274.2 L1271.2,271 L1278.6,263.8 L1280.8,266 L1273.6,273.4Z" fill="#111"/>
  <path d="M1285.2,264.3 H1297.1 V266.3 H1285.2Z M1289.5,262.8 H1292.8 V264.5 H1289.5Z" fill="#111"/>
  <path d="M1286.2,266.8 H1296.1 V276.6 a1.3,1.3 0 0 1 -1.3,1.3 H1287.5 a1.3,1.3 0 0 1 -1.3,-1.3Z" fill="#111"/>
  <path d="M1288.6,268.6 V276 M1293.7,268.6 V276" stroke="#ee1a47" stroke-width="0.9"/>
  <path d="M1290.6,268.6 H1291.8 V276 H1290.6Z" fill="#80122c"/>
  <path d="M1302,270.4 C1305,265 1313,265 1316.2,270.4 C1313,275.8 1305,275.8 1302,270.4Z" fill="#111"/>
  <path d="M1303.8,270.4 C1306.5,266.7 1311.7,266.7 1314.4,270.4 C1311.7,274.1 1306.5,274.1 1303.8,270.4Z" fill="#ee1a47"/>
  <circle cx="1309.2" cy="270.6" r="2.6" fill="#111"/>
</svg>
<div class="ct" style="left:1085px;top:260px;width:204px;text-align:center;color:#111;font-size:12.8px">web annotation</div>
<div class="ct" style="left:1086.5px;top:292px;white-space:pre">aromatic.sheep  -  ROI</div>
<div class="ct" style="left:1086.5px;top:310px;font-weight:bold;font-style:italic;text-decoration:underline;font-size:12.2px">BIDIRECTIONAL</div>
<div class="ct" style="left:1086.5px;top:328px">LongAxis:16.100</div>
<div class="ct" style="left:1086.5px;top:346px">ShortAxis:8.100</div>
<div class="abs" style="left:1100px;top:407px;font-size:14.6px;font-weight:bold;color:#9ea1a4;white-space:nowrap;line-height:20px">Other aims in series</div>
<div class="abs" style="left:1088px;top:434px;width:236px;height:1px;background:#23272b"></div>
<div class="abs" style="left:0;top:48px;width:1px;height:872px;background:#4f5659"></div>
<div class="abs" style="left:0;top:919px;width:1356px;height:1px;background:#2a2c2e"></div>
</body></html>
